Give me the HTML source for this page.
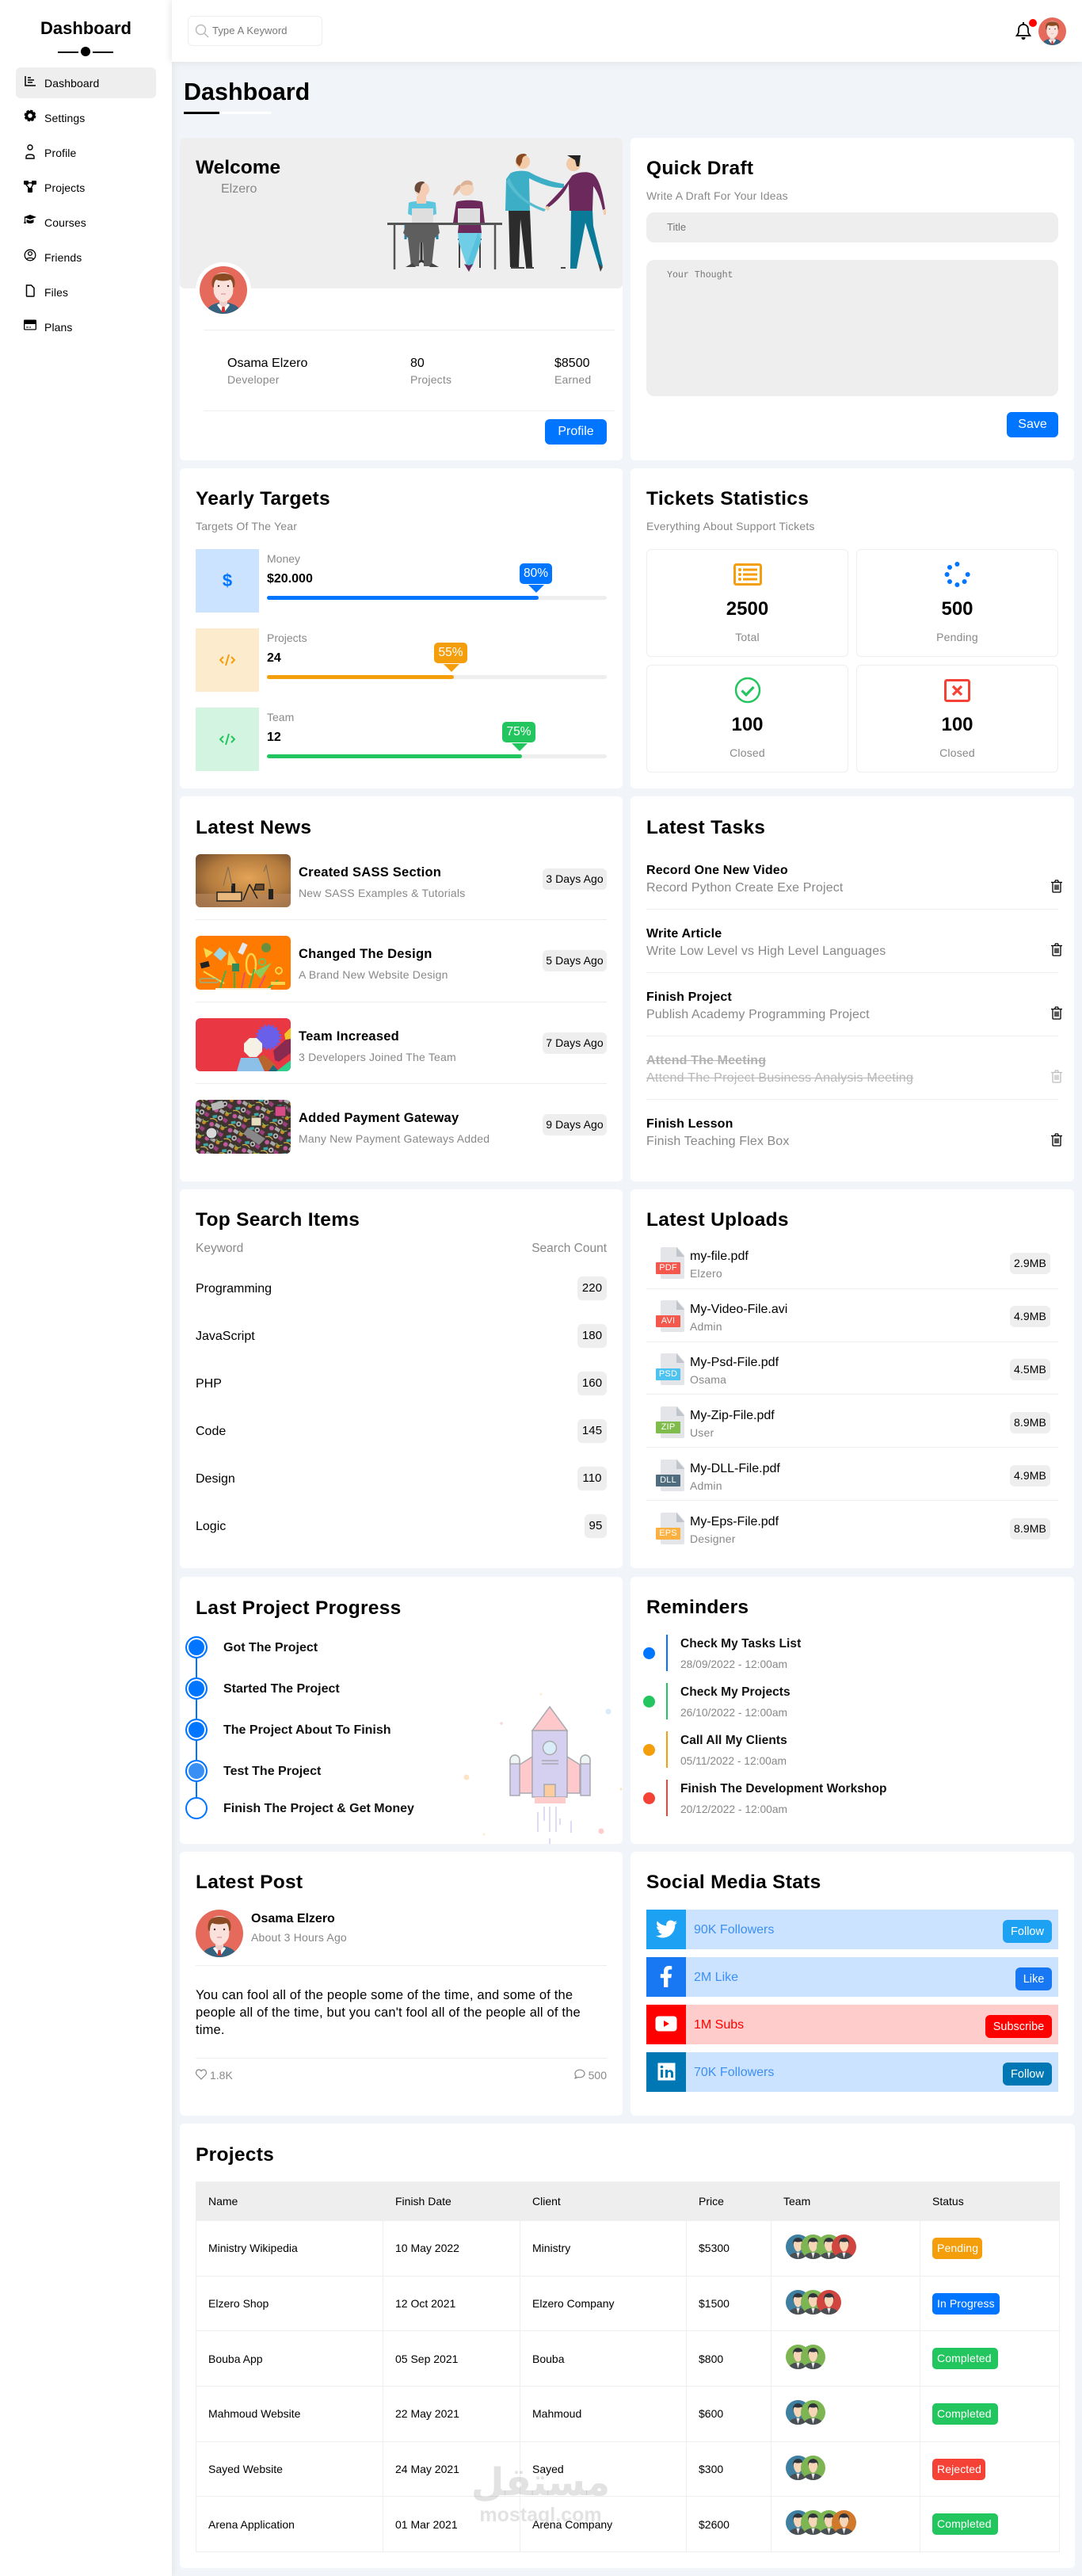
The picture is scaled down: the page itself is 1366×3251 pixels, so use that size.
<!DOCTYPE html>
<html lang="en">
<head>
<meta charset="utf-8">
<title>Dashboard</title>
<style>
*{box-sizing:border-box;margin:0;padding:0}
html,body{width:1366px;height:3251px;overflow:hidden}
body{position:relative;background:#f1f5f9;font-family:"Liberation Sans",Arial,sans-serif;color:#000;font-size:14px}
.a{position:absolute}
.t{position:absolute;line-height:20px;height:20px;white-space:nowrap;margin-top:1px}
.g{color:#888}
.b{font-weight:700}
.card{position:absolute;background:#fff;border-radius:6px}
.h2{position:absolute;left:0;font-size:24.5px;font-weight:700;line-height:30px;height:30px;white-space:nowrap;letter-spacing:.3px;margin-top:2px}
.ln{position:absolute;height:1px;background:#eee}
.bd{position:absolute;background:#eee;border-radius:6px;text-align:center;font-size:14px;letter-spacing:.1px}
.nav{position:absolute;left:56px;font-size:14px;line-height:20px;letter-spacing:.1px}
.sub{font-size:14px;letter-spacing:.2px}
.nt{font-size:16.5px;font-weight:700;letter-spacing:.25px}
.tt{font-size:16px;font-weight:700;letter-spacing:.15px}
.td{font-size:16px;letter-spacing:.12px}
.rt{font-size:15.5px;font-weight:700;color:#111;letter-spacing:.05px}
.rdt{font-size:13.8px}
.fl{position:absolute;left:828px;width:31px;height:15px;border-radius:1px;color:#fff;font-size:11px;line-height:15px;text-align:center;letter-spacing:.2px}
.pct{position:absolute;width:42px;height:26px;border-radius:5px;color:#fff;text-align:center;line-height:26px;font-size:15.5px}
.tri{position:absolute;width:0;height:0;border-left:10px solid transparent;border-right:10px solid transparent;border-top:10px solid}
.track{position:absolute;left:337px;width:429px;height:5px;background:#eee;border-radius:3px}
.track i{display:block;height:5px;border-radius:3px}
.tk{position:absolute;width:255px;height:136px;border:1px solid #eee;border-radius:6px}
.num{position:absolute;left:0;right:0;text-align:center;font-size:24px;font-weight:700;line-height:30px;top:60px}
.lab{position:absolute;left:0;right:0;text-align:center;font-size:14px;color:#888;line-height:20px;top:100px;letter-spacing:.2px}
.dot{position:absolute;left:234px;width:28px;height:28px;border-radius:50%;border:2px solid #0075ff;background:#0075ff;box-shadow:inset 0 0 0 2px #fff}
.st{position:absolute;left:282px;font-size:16px;font-weight:700;line-height:20px;white-space:nowrap;color:#111;margin-top:1px}
.rd{position:absolute;left:812px;width:15px;height:15px;border-radius:50%}
.rl{position:absolute;left:841px;width:2px;height:46px}
.soc{position:absolute;left:816px;width:520px;height:50px}
.soc svg{position:absolute;left:0;top:0}
.soc b{position:absolute;left:0;top:0;width:50px;height:50px;display:block}
.soc span{position:absolute;left:60px;top:16px;font-size:16px;line-height:20px}
.soc em{position:absolute;right:8px;top:13px;height:29px;border-radius:6px;color:#fff;font-style:normal;font-size:14.5px;line-height:30px;text-align:center}
table{position:absolute;left:247px;top:2753px;width:1090px;border-collapse:collapse;table-layout:fixed;font-size:14px}
td,th{border:1px solid #eee;padding:0 0 0 15px;text-align:left;font-weight:400;vertical-align:middle}
th{background:#eee;border-color:#eee;height:49px}
td{height:69.7px}
.s{display:inline-block;height:27px;line-height:27px;border-radius:5px;color:#fff;padding:0 6px;letter-spacing:.1px}
.team{position:relative;height:31px;top:-2px}
.team svg{position:absolute;top:0;width:31px;height:31px}
</style>
</head>
<body>
<svg width="0" height="0" style="position:absolute">
<defs>
<clipPath id="cc"><circle cx="30" cy="30" r="30"/></clipPath>
<symbol id="av" viewBox="0 0 60 60">
<g clip-path="url(#cc)">
<rect width="60" height="60" fill="#e56a5c"/>
<path d="M8 60c1-9 8-12 16-14h12c8 2 15 5 16 14z" fill="#35627e"/>
<path d="M25 44h10v5l-5 5-5-5z" fill="#eccfc8"/>
<path d="M24 47l6 6 6-6 2 2-6 8h-4l-6-8z" fill="#fff"/>
<path d="M28.5 51h3l1 7h-5z" fill="#d0342c"/>
<path d="M17 20c0-8 6-12 13-12s13 4 13 12l-1 14c-2 7-7 11-12 11s-10-4-12-11z" fill="#fbe1dc"/>
<path d="M16 26c-2-10 2-17 14-17s16 7 14 17l-2 1c0-5-1-8-3-10-6 2-13 2-18 0-2 2-3 5-3 10z" fill="#8a4a24"/>
<circle cx="24" cy="25" r="1.2" fill="#433"/><circle cx="36" cy="25" r="1.2" fill="#433"/>
<path d="M27 35h6" stroke="#d99" stroke-width="1.2"/>
</g>
</symbol>
<symbol id="tm" viewBox="0 0 60 60">
<g clip-path="url(#cc)">
<rect width="60" height="60" fill="currentColor"/>
<path d="M6 60c2-11 10-14 18-16h12c8 2 16 5 18 16z" fill="#4a4f54"/>
<path d="M26 44h8l-4 14z" fill="#eee"/>
<path d="M19 22c0-8 5-12 11-12s11 4 11 12-4 20-11 20-11-12-11-20z" fill="#f6d5b8"/>
<path d="M18 26c-2-12 4-18 12-18s14 6 12 18c-1-5-2-8-4-9-5 2-11 2-16 0-2 1-3 4-4 9z" fill="#30343a"/>
</g>
</symbol>
<symbol id="file" viewBox="0 0 30 40">
<path d="M0 2a2 2 0 0 1 2-2h19l9 10v28a2 2 0 0 1-2 2H2a2 2 0 0 1-2-2z" fill="#e3e5e8"/>
<path d="M20 0l10 12H20z" fill="#bfc5cb"/>
</symbol>
<pattern id="dood" width="34" height="26" patternUnits="userSpaceOnUse" patternTransform="scale(.72) rotate(18)">
<rect width="34" height="26" fill="#3f3330"/>
<circle cx="6" cy="6" r="4" fill="#c05a9c"/><rect x="12" y="2" width="9" height="6" fill="#a9a9a9" transform="rotate(15 16 5)"/>
<circle cx="26" cy="7" r="3.5" fill="#c98a2a"/><rect x="3" y="15" width="8" height="5" fill="#3ca8a4" transform="rotate(-25 7 17)"/>
<circle cx="17" cy="17" r="4.5" fill="#bdbdbd"/><circle cx="17" cy="17" r="2" fill="#222"/><path d="M23 14l8 2-2 7-7-3z" fill="#9c3f7e"/>
<path d="M0 24q8-5 14 1" stroke="#e2c04a" stroke-width="1.5" fill="none"/><path d="M22 2q5 6 11 0" stroke="#8ec44c" stroke-width="1.5" fill="none"/>
</pattern>
</defs>
</svg>

<!-- sidebar -->
<div class="a" style="left:0;top:0;width:217px;height:3251px;background:#fff;box-shadow:0 0 10px #ddd"></div>
<div class="a b" style="left:0;width:217px;top:21px;text-align:center;font-size:22px;line-height:30px">Dashboard</div>
<div class="a" style="left:73px;top:65px;width:26px;height:2px;background:#000"></div>
<div class="a" style="left:117px;top:65px;width:26px;height:2px;background:#000"></div>
<div class="a" style="left:102px;top:59px;width:12px;height:12px;border-radius:50%;background:#000"></div>
<div class="a" style="left:20px;top:85px;width:177px;height:39px;background:#eee;border-radius:6px"></div>
<div class="nav" style="top:95px">Dashboard</div>
<div class="nav" style="top:139px">Settings</div>
<div class="nav" style="top:183px">Profile</div>
<div class="nav" style="top:227px">Projects</div>
<div class="nav" style="top:271px">Courses</div>
<div class="nav" style="top:315px">Friends</div>
<div class="nav" style="top:359px">Files</div>
<div class="nav" style="top:403px">Plans</div>
<svg class="a" style="left:30px;top:94px" width="16" height="330" viewBox="0 0 16 330">
<path d="M2 2v12h13" fill="none" stroke="#000" stroke-width="1.5"/><path d="M5 4h4M5 7h8M5 10h6" stroke="#000" stroke-width="1.5"/>
<g transform="translate(8 52)"><circle r="4.5" fill="none" stroke="#000" stroke-width="3.5"/><circle r="6.2" fill="none" stroke="#000" stroke-width="2.4" stroke-dasharray="3.2 1.67"/></g>
<g fill="none" stroke="#000" stroke-width="1.4"><circle cx="8" cy="92" r="3"/><path d="M3 106v-2c0-2 2-3 5-3s5 1 5 3v2z"/></g>
<g fill="#000"><rect x="0" y="134" width="6" height="5" rx="1"/><rect x="10" y="134" width="6" height="5" rx="1"/><rect x="5" y="143" width="6" height="6" rx="1"/><path d="M3 136h10v1.5H3zM3 138l5 6-1 1-5-6zM12 137l-4 7 1 1 4-7z"/></g>
<path d="M8 177l8 3-8 3-6-2.200V185l1 3H0l1-3v-4.700L0 180zM3.5 183l4.5 1.600 4.500-1.600v3.500c-2 2-7 2-9 0z" fill="#000"/>
<g fill="none" stroke="#000" stroke-width="1.3"><circle cx="8" cy="228" r="6.8"/><circle cx="8" cy="226" r="2.4"/><path d="M3.8 233c1-2 7.400-2 8.400 0"/></g>
<path d="M3.5 266h6l3.500 3.500V279a1 1 0 0 1-1 1H4.500a1 1 0 0 1-1-1z" fill="none" stroke="#000" stroke-width="1.5"/>
<path d="M0 311a1.500 1.500 0 0 1 1.500-1.500h13a1.500 1.500 0 0 1 1.500 1.500v10a1.500 1.500 0 0 1-1.500 1.500h-13A1.500 1.500 0 0 1 0 321z" fill="#000"/><rect x="1.3" y="315" width="13.4" height="6.3" fill="#fff"/><path d="M3 319h3M7 319h2" stroke="#000"/>
</svg>

<!-- header -->
<div class="a" style="left:217px;top:0;width:1149px;height:78px;background:#fff;box-shadow:0 0 10px #ddd"></div>
<div class="a" style="left:237px;top:20px;width:170px;height:38px;border:1px solid #eee;border-radius:6px"></div>
<svg class="a" style="left:246px;top:30px" width="18" height="18" viewBox="0 0 18 18"><circle cx="7.5" cy="7.5" r="6" fill="none" stroke="#bbb" stroke-width="1.5"/><path d="M12 12l5 5" stroke="#bbb" stroke-width="1.5"/></svg>
<div class="t" style="left:268px;top:28px;font-size:13px;color:#777;letter-spacing:.1px">Type A Keyword</div>
<svg class="a" style="left:1282px;top:28px" width="20" height="23" viewBox="0 0 20 23"><path d="M10 3c4 0 6 3 6 6v3c0 2 1 3 2.500 5H1.500C3 15 4 14 4 12V9c0-3 2-6 6-6z" fill="none" stroke="#000" stroke-width="1.7"/><path d="M9 0h2v3H9zM7.500 19h5c0 2-1 3-2.500 3s-2.500-1-2.500-3z" fill="#000"/></svg>
<div class="a" style="left:1299px;top:24px;width:10px;height:10px;border-radius:50%;background:#f00"></div>
<svg class="a" style="left:1311px;top:22px" width="35" height="35"><use href="#av"/></svg>

<!-- title -->
<div class="a b" style="left:232px;top:96px;font-size:30.5px;line-height:40px">Dashboard</div>
<div class="a" style="left:232px;top:141px;width:110px;height:3px;background:#fff"></div>
<div class="a" style="left:232px;top:141px;width:45px;height:3px;background:#000"></div>

<!-- welcome -->
<div class="card" style="left:227px;top:174px;width:559px;height:407px"></div>
<div class="a" style="left:227px;top:174px;width:559px;height:190px;background:#eee;border-radius:6px"></div>
<div class="a b" style="left:247px;top:197px;font-size:24.5px;line-height:30px">Welcome</div>
<div class="t g" style="left:279px;top:228px;font-size:16px">Elzero</div>
<svg class="a" style="left:480px;top:185px" width="300" height="165" viewBox="480 185 300 165">
<path d="M512 282v20M552 282v20M513 298h40" stroke="#2a7f9e" stroke-width="3"/>
<path d="M532 300v28M520 335l12-6 12 6" stroke="#333" stroke-width="3" fill="none"/>
<path d="M578 302h30M580 302v36M606 302v36" stroke="#444" stroke-width="2" fill="none"/>
<path d="M513 282h40l2 12-6 6-4 36h-10l-1-30h-4l-1 30h-10l-4-36-6-6z" fill="#5e5e5e"/>
<path d="M516 256c4-3 30-3 34 0l1 14-5 2v9h-26v-9l-5-2z" fill="#5cc6de"/>
<rect x="526" y="247" width="12" height="10" fill="#f4cdb4"/>
<circle cx="533" cy="239" r="9" fill="#f4cdb4"/><path d="M524 241c-2-8 3-12 9-12 2 0 3 1 3 2-4 1-5 5-5 8l-2 5z" fill="#6a4a3a"/>
<rect x="520" y="263" width="27" height="19" fill="#dedede"/>
<path d="M512 337l9-5 4 5zM545 332l9 5h-12z" fill="#444"/>
<path d="M578 293h30l-1 12-10 30h-8l-10-30z" fill="#6fcde6"/>
<path d="M604 293l3 10-11 34h-8z" fill="#58c2dd"/>
<path d="M586 333l6 10 5-10-5 2z" fill="#6c2a5c"/>
<path d="M576 255c4-3 29-3 33 0l3 26-5 3 1 10h-30l1-10-7-3z" fill="#6c2a5c"/>
<circle cx="589" cy="238" r="9" fill="#f3d3b9"/><path d="M581 235c2-7 9-9 14-6 2 2 2 4 1 5-5-2-10-1-12 1zM582 233c-4 0-8 4-10 14 4-2 7-6 9-9z" fill="#dcb195"/>
<rect x="578" y="263" width="28" height="19" fill="#dedede"/>
<rect x="489" y="281" width="145" height="3" fill="#555"/>
<path d="M498 284v56M625 284v56" stroke="#555" stroke-width="2.5"/>
<path d="M642 265h27l3 72h-8l-7-60-2 60h-11z" fill="#2c2c2c"/>
<path d="M649 337h-4v2h17v-2zM664 337h10v2h-10z" fill="#444"/>
<path d="M644 219c6-4 18-4 24-2 10 6 28 13 44 15v5c-16 1-32-6-44-12l1 41h-31l1-40z" fill="#3cafc6"/>
<path d="M643 224c6 16 20 32 46 40l-2 3c-24-8-40-24-48-38z" fill="#57bcd0"/>
<circle cx="660" cy="204" r="9" fill="#f3cba8"/><path d="M652 206c-2-8 3-12 9-12 2 0 4 1 4 2-5 1-6 4-6 8l-3 6z" fill="#8a4a24"/>
<path d="M721 265h27l1 20 12 51-4 3-18-58-11 58h-8z" fill="#0b7a99"/>
<path d="M714 337v2h-6v-2zM755 332l6 5-3 6z" fill="#444"/>
<path d="M722 222c8-6 22-6 27-2 8 6 12 24 15 44l-3 1c-3-14-7-24-12-30l-1 31h-29l-1-34c-4 10-14 22-26 30l-3-2c12-12 24-24 33-38z" fill="#6c2a5c"/>
<circle cx="724" cy="207" r="9" fill="#f3cba8"/><path d="M716 196h17l-2 14h-3l-2-8z" fill="#222"/>
<path d="M688 261l4-1 2 4-3 2zM762 264h3v7h-3z" fill="#f3cba8"/>
</svg>
<div class="a" style="left:247px;top:331px;width:70px;height:70px;border-radius:50%;background:#fff"></div>
<svg class="a" style="left:252px;top:336px" width="60" height="60"><use href="#av"/></svg>
<div class="ln" style="left:257px;top:416px;width:519px"></div>
<div class="t" style="left:287px;top:448px;font-size:16px">Osama Elzero</div>
<div class="t g sub" style="left:287px;top:468px">Developer</div>
<div class="t" style="left:518px;top:448px;font-size:16px">80</div>
<div class="t g sub" style="left:518px;top:468px">Projects</div>
<div class="t" style="left:700px;top:448px;font-size:16px">$8500</div>
<div class="t g sub" style="left:700px;top:468px">Earned</div>
<div class="ln" style="left:257px;top:518px;width:519px"></div>
<div class="a" style="left:688px;top:529px;width:78px;height:32px;background:#0075ff;border-radius:6px;color:#fff;text-align:center;line-height:32px;font-size:16px">Profile</div>

<!-- draft -->
<div class="card" style="left:796px;top:174px;width:560px;height:407px"></div>
<div class="h2" style="left:816px;top:196px">Quick Draft</div>
<div class="t g sub" style="left:816px;top:236px">Write A Draft For Your Ideas</div>
<div class="a" style="left:816px;top:268px;width:520px;height:38px;background:#eee;border-radius:10px"></div>
<div class="t" style="left:842px;top:276px;font-size:13px;color:#757575">Title</div>
<div class="a" style="left:816px;top:328px;width:520px;height:172px;background:#eee;border-radius:10px"></div>
<div class="t" style="left:842px;top:337px;font-family:'Liberation Mono',monospace;font-size:11.6px;color:#757575">Your Thought</div>
<div class="a" style="left:1271px;top:520px;width:65px;height:32px;background:#0075ff;border-radius:6px;color:#fff;text-align:center;line-height:32px;font-size:16px">Save</div>

<!-- targets -->
<div class="card" style="left:227px;top:591px;width:559px;height:404px"></div>
<div class="h2" style="left:247px;top:613px">Yearly Targets</div>
<div class="t g sub" style="left:247px;top:653px">Targets Of The Year</div>
<div class="a" style="left:247px;top:693px;width:80px;height:80px;background:#cce3ff"></div>
<div class="a" style="left:247px;top:793px;width:80px;height:80px;background:#fdebcd"></div>
<div class="a" style="left:247px;top:893px;width:80px;height:80px;background:#d2f4e0"></div>
<div class="a b" style="left:247px;top:718px;width:80px;text-align:center;font-size:22px;line-height:30px;color:#0075ff">$</div>
<svg class="a" style="left:277px;top:826px" width="20" height="14" viewBox="0 0 20 14" fill="none" stroke="#f59e0b" stroke-width="2"><path d="M5 3L1 7l4 4M15 3l4 4-4 4M12 0L8 14"/></svg>
<svg class="a" style="left:277px;top:926px" width="20" height="14" viewBox="0 0 20 14" fill="none" stroke="#22c55e" stroke-width="2"><path d="M5 3L1 7l4 4M15 3l4 4-4 4M12 0L8 14"/></svg>
<div class="t g" style="left:337px;top:694px;font-size:14px">Money</div>
<div class="t b" style="left:337px;top:720px;font-size:16px">$20.000</div>
<div class="t g" style="left:337px;top:794px;font-size:14px">Projects</div>
<div class="t b" style="left:337px;top:820px;font-size:16px">24</div>
<div class="t g" style="left:337px;top:894px;font-size:14px">Team</div>
<div class="t b" style="left:337px;top:920px;font-size:16px">12</div>
<div class="track" style="top:752px"><i style="width:343px;background:#0075ff"></i></div>
<div class="track" style="top:852px"><i style="width:236px;background:#f59e0b"></i></div>
<div class="track" style="top:952px"><i style="width:322px;background:#22c55e"></i></div>
<div class="pct" style="left:656px;top:711px;width:41px;background:#0075ff">80%</div>
<div class="tri" style="left:667px;top:738px;border-top-color:#0075ff"></div>
<div class="pct" style="left:548px;top:811px;background:#f59e0b">55%</div>
<div class="tri" style="left:560px;top:838px;border-top-color:#f59e0b"></div>
<div class="pct" style="left:634px;top:911px;background:#22c55e">75%</div>
<div class="tri" style="left:646px;top:938px;border-top-color:#22c55e"></div>

<!-- tickets -->
<div class="card" style="left:796px;top:591px;width:560px;height:404px"></div>
<div class="h2" style="left:816px;top:613px">Tickets Statistics</div>
<div class="t g sub" style="left:816px;top:653px">Everything About Support Tickets</div>
<div class="tk" style="left:816px;top:693px"><div class="num">2500</div><div class="lab">Total</div></div>
<div class="tk" style="left:1081px;top:693px"><div class="num">500</div><div class="lab">Pending</div></div>
<div class="tk" style="left:816px;top:839px"><div class="num">100</div><div class="lab">Closed</div></div>
<div class="tk" style="left:1081px;top:839px"><div class="num">100</div><div class="lab">Closed</div></div>
<svg class="a" style="left:926px;top:711px" width="36" height="28" viewBox="0 0 36 28"><rect x="1.5" y="1.5" width="33" height="25" rx="2" fill="none" stroke="#f59e0b" stroke-width="3"/><g fill="#f59e0b"><circle cx="8" cy="8" r="2"/><circle cx="8" cy="14" r="2"/><circle cx="8" cy="20" r="2"/><rect x="12" y="6.5" width="18" height="3"/><rect x="12" y="12.5" width="18" height="3"/><rect x="12" y="18.5" width="18" height="3"/></g></svg>
<svg class="a" style="left:1190px;top:708px" width="36" height="34" viewBox="1190 708 36 34" fill="#0075ff"><circle cx="1208.4" cy="712" r="3"/><circle cx="1199" cy="716" r="3"/><circle cx="1221.7" cy="725" r="3"/><circle cx="1195.6" cy="725" r="3"/><circle cx="1199" cy="734" r="3"/><circle cx="1217.6" cy="734" r="3"/><circle cx="1208.4" cy="738" r="3"/></svg>
<svg class="a" style="left:927px;top:854px" width="34" height="34" viewBox="0 0 34 34"><circle cx="17" cy="17" r="15" fill="none" stroke="#22c55e" stroke-width="2.5"/><path d="M9.500 17.500l5.500 5.500 9.500-10" fill="none" stroke="#22c55e" stroke-width="3.2"/></svg>
<svg class="a" style="left:1192px;top:857px" width="33" height="29" viewBox="0 0 33 29"><rect x="1.5" y="1.5" width="30" height="26" rx="2" fill="none" stroke="#f44336" stroke-width="3"/><path d="M11 9l11 11M22 9L11 20" stroke="#f44336" stroke-width="3.2"/></svg>

<!-- news -->
<div class="card" style="left:227px;top:1005px;width:559px;height:486px"></div>
<div class="h2" style="left:247px;top:1028px">Latest News</div>
<svg class="a" style="left:247px;top:1078px;border-radius:6px" width="120" height="67" viewBox="0 0 120 67">
<defs><radialGradient id="g1" cx=".55" cy=".45" r=".7"><stop offset="0" stop-color="#e3a456"/><stop offset=".6" stop-color="#b27a3e"/><stop offset="1" stop-color="#6e4a2c"/></radialGradient></defs>
<rect width="120" height="67" fill="url(#g1)"/><rect y="50" width="120" height="17" fill="#b8865a" opacity=".7"/>
<rect x="27" y="48" width="31" height="11" fill="#e8b87c" stroke="#222" stroke-width="1.5"/><rect x="45" y="37" width="5" height="12" fill="#222"/><rect x="92" y="44" width="6" height="13" fill="#222"/>
<path d="M60 58l8-20M68 38l10 18M76 38h10v7H74z" stroke="#222" fill="#6e4a2c" stroke-width="1.5"/><path d="M35 40l6-24 5 24M95 44l-6-30-3 8" stroke="#7a6a58" fill="none"/>
</svg>
<svg class="a" style="left:247px;top:1181px;border-radius:6px" width="120" height="68" viewBox="0 0 120 68">
<rect width="120" height="68" fill="#ff7a00"/>
<path d="M10 15l12 6-9 7z" fill="#f7d84a"/><rect x="25" y="17" width="12" height="12" fill="#9bd6e4" transform="rotate(40 31 23)"/>
<path d="M42 18l14 25-8-6-8 0z" fill="#f9c94a"/><rect x="56" y="9" width="7" height="14" fill="#e7e7e7" transform="rotate(25 59 16)"/><rect x="6" y="33" width="11" height="7" fill="#222" transform="rotate(-15 12 36)"/>
<path d="M10 45l26 15" stroke="#f7d84a" stroke-width="2"/><ellipse cx="70" cy="36" rx="6" ry="13" fill="none" stroke="#f9d44a" stroke-width="2.5"/>
<path d="M74 45l22-11-14 20z" fill="#8ecb5a"/><circle cx="89" cy="15" r="6" fill="#6a8f3c"/><circle cx="84" cy="33" r="4" fill="none" stroke="#6ec05a" stroke-width="2"/>
<rect x="46" y="35" width="9" height="10" fill="#2f8b57"/>
<path d="M31 66l7-22M49 66V46M68 66l6-24M92 66l12-10" stroke-width="2" stroke="#3cb44a"/><path d="M58 66l4-20M80 66l8-16" stroke-width="2" stroke="#e94f6a"/>
<rect x="5" y="54" width="24" height="5" rx="2.5" fill="none" stroke="#67c7c0"/><rect x="25" y="66" width="70" height="2" fill="#f5efd8"/>
<circle cx="105" cy="44" r="4" fill="none" stroke="#f9d44a" stroke-width="2"/><rect x="95" y="58" width="18" height="4" fill="#f9d44a"/>
</svg>
<svg class="a" style="left:247px;top:1285px;border-radius:6px" width="120" height="67" viewBox="0 0 120 67">
<rect width="120" height="67" fill="#e93744"/><circle cx="92" cy="24" r="14" fill="#6a5fe8"/><circle cx="92" cy="24" r="15" fill="none" stroke="#6a5fe8" stroke-width="2.5" stroke-dasharray="2.500 2.500"/>
<path d="M66 33l7-7h9l7 7v10l-7 7h-9l-7-7" fill="#f5f1e4" transform="translate(-5 -1)"/>
<path d="M112 20l8-8v16l-6 3z" fill="#f2c628"/><path d="M86 46l16 14-13 7-15-14z" fill="#b8642c"/><path d="M98 41l16-14 6-1v18l-15 11-5-2z" fill="#8b2a50"/>
<path d="M52 67l5-17h22l8 17z" fill="#8cc0e8"/><path d="M92 67l6-8 7 8z" fill="#1f6b78"/><path d="M102 67l18-14v14z" fill="#2fd08c"/>
</svg>
<svg class="a" style="left:247px;top:1388px;border-radius:6px" width="120" height="68" viewBox="0 0 120 68">
<rect width="120" height="68" fill="url(#dood)"/><rect x="20" y="3" width="15" height="9" fill="#b8b8b8" transform="rotate(-15 27 7)"/><rect x="70" y="22" width="13" height="11" fill="#e8dcc0" stroke="#222"/><rect x="100" y="8" width="14" height="13" fill="#d84c86" stroke="#222"/><circle cx="20" cy="42" r="7" fill="#d8d8d8" stroke="#222"/><path d="M66 35l22 14-8 8-20-14z" fill="#888"/>
</svg>
<div class="t nt" style="left:377px;top:1090px">Created SASS Section</div>
<div class="t g sub" style="left:377px;top:1116px">New SASS Examples &amp; Tutorials</div>
<div class="bd" style="left:685px;top:1096px;width:81px;height:27px;line-height:27px">3 Days Ago</div>
<div class="ln" style="left:247px;top:1160px;width:519px"></div>
<div class="t nt" style="left:377px;top:1193px">Changed The Design</div>
<div class="t g sub" style="left:377px;top:1219px">A Brand New Website Design</div>
<div class="bd" style="left:685px;top:1199px;width:81px;height:27px;line-height:27px">5 Days Ago</div>
<div class="ln" style="left:247px;top:1264px;width:519px"></div>
<div class="t nt" style="left:377px;top:1297px">Team Increased</div>
<div class="t g sub" style="left:377px;top:1323px">3 Developers Joined The Team</div>
<div class="bd" style="left:685px;top:1303px;width:81px;height:27px;line-height:27px">7 Days Ago</div>
<div class="ln" style="left:247px;top:1367px;width:519px"></div>
<div class="t nt" style="left:377px;top:1400px">Added Payment Gateway</div>
<div class="t g sub" style="left:377px;top:1426px">Many New Payment Gateways Added</div>
<div class="bd" style="left:685px;top:1406px;width:81px;height:27px;line-height:27px">9 Days Ago</div>

<!-- tasks -->
<div class="card" style="left:796px;top:1005px;width:560px;height:486px"></div>
<div class="h2" style="left:816px;top:1028px">Latest Tasks</div>
<div class="t tt" style="left:816px;top:1088px">Record One New Video</div>
<div class="t g td" style="left:816px;top:1110px">Record Python Create Exe Project</div>
<div class="ln" style="left:816px;top:1147px;width:520px"></div>
<div class="t tt" style="left:816px;top:1168px">Write Article</div>
<div class="t g td" style="left:816px;top:1190px">Write Low Level vs High Level Languages</div>
<div class="ln" style="left:816px;top:1227px;width:520px"></div>
<div class="t tt" style="left:816px;top:1248px">Finish Project</div>
<div class="t g td" style="left:816px;top:1270px">Publish Academy Programming Project</div>
<div class="ln" style="left:816px;top:1307px;width:520px"></div>
<div class="t tt" style="left:816px;top:1328px;opacity:.3;text-decoration:line-through">Attend The Meeting</div>
<div class="t td" style="left:816px;top:1350px;color:#888;opacity:.6;letter-spacing:.25px;text-decoration:line-through">Attend The Project Business Analysis Meeting</div>
<div class="ln" style="left:816px;top:1387px;width:520px"></div>
<div class="t tt" style="left:816px;top:1408px">Finish Lesson</div>
<div class="t g td" style="left:816px;top:1430px">Finish Teaching Flex Box</div>
<svg class="a" style="left:1327px;top:1110px" width="14" height="17" viewBox="0 0 14 17" fill="none" stroke="#000" stroke-width="1.3"><path d="M0 3.500h14M4.500 3.500l1-2.500h3l1 2.500M2 3.500V15a1 1 0 0 0 1 1h8a1 1 0 0 0 1-1V3.500M5 6.500V13M7 6.500V13M9 6.500V13"/></svg>
<svg class="a" style="left:1327px;top:1190px" width="14" height="17" viewBox="0 0 14 17" fill="none" stroke="#000" stroke-width="1.3"><path d="M0 3.500h14M4.500 3.500l1-2.500h3l1 2.500M2 3.500V15a1 1 0 0 0 1 1h8a1 1 0 0 0 1-1V3.500M5 6.500V13M7 6.500V13M9 6.500V13"/></svg>
<svg class="a" style="left:1327px;top:1270px" width="14" height="17" viewBox="0 0 14 17" fill="none" stroke="#000" stroke-width="1.3"><path d="M0 3.500h14M4.500 3.500l1-2.500h3l1 2.500M2 3.500V15a1 1 0 0 0 1 1h8a1 1 0 0 0 1-1V3.500M5 6.500V13M7 6.500V13M9 6.500V13"/></svg>
<svg class="a" style="left:1327px;top:1350px;opacity:.25" width="14" height="17" viewBox="0 0 14 17" fill="none" stroke="#000" stroke-width="1.3"><path d="M0 3.500h14M4.500 3.500l1-2.500h3l1 2.500M2 3.500V15a1 1 0 0 0 1 1h8a1 1 0 0 0 1-1V3.500M5 6.500V13M7 6.500V13M9 6.500V13"/></svg>
<svg class="a" style="left:1327px;top:1430px" width="14" height="17" viewBox="0 0 14 17" fill="none" stroke="#000" stroke-width="1.3"><path d="M0 3.500h14M4.500 3.500l1-2.500h3l1 2.500M2 3.500V15a1 1 0 0 0 1 1h8a1 1 0 0 0 1-1V3.500M5 6.500V13M7 6.500V13M9 6.500V13"/></svg>

<!-- search -->
<div class="card" style="left:227px;top:1501px;width:559px;height:478px"></div>
<div class="h2" style="left:247px;top:1523px">Top Search Items</div>
<div class="t g" style="left:247px;top:1565px;font-size:15.5px">Keyword</div>
<div class="t g" style="right:600px;top:1565px;font-size:15.5px">Search Count</div>
<div class="t" style="left:247px;top:1616px;font-size:16px">Programming</div><div class="bd" style="left:729px;top:1611px;width:37px;height:30px;line-height:30px;font-size:15px">220</div>
<div class="t" style="left:247px;top:1676px;font-size:16px">JavaScript</div><div class="bd" style="left:729px;top:1671px;width:37px;height:30px;line-height:30px;font-size:15px">180</div>
<div class="t" style="left:247px;top:1736px;font-size:16px">PHP</div><div class="bd" style="left:729px;top:1731px;width:37px;height:30px;line-height:30px;font-size:15px">160</div>
<div class="t" style="left:247px;top:1796px;font-size:16px">Code</div><div class="bd" style="left:729px;top:1791px;width:37px;height:30px;line-height:30px;font-size:15px">145</div>
<div class="t" style="left:247px;top:1856px;font-size:16px">Design</div><div class="bd" style="left:729px;top:1851px;width:37px;height:30px;line-height:30px;font-size:15px">110</div>
<div class="t" style="left:247px;top:1916px;font-size:16px">Logic</div><div class="bd" style="left:738px;top:1911px;width:28px;height:30px;line-height:30px;font-size:15px">95</div>

<!-- uploads -->
<div class="card" style="left:796px;top:1501px;width:560px;height:478px"></div>
<div class="h2" style="left:816px;top:1523px">Latest Uploads</div>
<svg class="a" style="left:834px;top:1574px" width="30" height="40"><use href="#file"/></svg>
<div class="fl" style="top:1593px;background:#f4574b">PDF</div>
<div class="t" style="left:871px;top:1575px;font-size:16px">my-file.pdf</div><div class="t g sub" style="left:871px;top:1596px">Elzero</div>
<div class="bd" style="left:1275px;top:1581px;width:51px;height:27px;line-height:27px">2.9MB</div>
<div class="ln" style="left:816px;top:1626px;width:520px"></div>
<svg class="a" style="left:834px;top:1641px" width="30" height="40"><use href="#file"/></svg>
<div class="fl" style="top:1660px;background:#f4574b">AVI</div>
<div class="t" style="left:871px;top:1642px;font-size:16px">My-Video-File.avi</div><div class="t g sub" style="left:871px;top:1663px">Admin</div>
<div class="bd" style="left:1275px;top:1648px;width:51px;height:27px;line-height:27px">4.9MB</div>
<div class="ln" style="left:816px;top:1693px;width:520px"></div>
<svg class="a" style="left:834px;top:1708px" width="30" height="40"><use href="#file"/></svg>
<div class="fl" style="top:1727px;background:#4fc3ef">PSD</div>
<div class="t" style="left:871px;top:1709px;font-size:16px">My-Psd-File.pdf</div><div class="t g sub" style="left:871px;top:1730px">Osama</div>
<div class="bd" style="left:1275px;top:1715px;width:51px;height:27px;line-height:27px">4.5MB</div>
<div class="ln" style="left:816px;top:1759px;width:520px"></div>
<svg class="a" style="left:834px;top:1775px" width="30" height="40"><use href="#file"/></svg>
<div class="fl" style="top:1794px;background:#80bc4c">ZIP</div>
<div class="t" style="left:871px;top:1776px;font-size:16px">My-Zip-File.pdf</div><div class="t g sub" style="left:871px;top:1797px">User</div>
<div class="bd" style="left:1275px;top:1782px;width:51px;height:27px;line-height:27px">8.9MB</div>
<div class="ln" style="left:816px;top:1826px;width:520px"></div>
<svg class="a" style="left:834px;top:1842px" width="30" height="40"><use href="#file"/></svg>
<div class="fl" style="top:1861px;background:#4f6d7e">DLL</div>
<div class="t" style="left:871px;top:1843px;font-size:16px">My-DLL-File.pdf</div><div class="t g sub" style="left:871px;top:1864px">Admin</div>
<div class="bd" style="left:1275px;top:1849px;width:51px;height:27px;line-height:27px">4.9MB</div>
<div class="ln" style="left:816px;top:1893px;width:520px"></div>
<svg class="a" style="left:834px;top:1909px" width="30" height="40"><use href="#file"/></svg>
<div class="fl" style="top:1928px;background:#fbb040">EPS</div>
<div class="t" style="left:871px;top:1910px;font-size:16px">My-Eps-File.pdf</div><div class="t g sub" style="left:871px;top:1931px">Designer</div>
<div class="bd" style="left:1275px;top:1916px;width:51px;height:27px;line-height:27px">8.9MB</div>

<!-- progress -->
<div class="card" style="left:227px;top:1990px;width:559px;height:337px"></div>
<div class="h2" style="left:247px;top:2013px">Last Project Progress</div>
<div class="a" style="left:247px;top:2085px;width:2px;height:190px;background:#0075ff"></div>
<div class="dot" style="top:2065px"></div><div class="st" style="top:2069px">Got The Project</div>
<div class="dot" style="top:2117px"></div><div class="st" style="top:2121px">Started The Project</div>
<div class="dot" style="top:2169px"></div><div class="st" style="top:2173px">The Project About To Finish</div>
<div class="dot" style="top:2221px;background:#3a8ff5"></div><div class="st" style="top:2225px">Test The Project</div>
<div class="dot" style="top:2268px;background:#fff;box-shadow:none"></div><div class="st" style="top:2272px">Finish The Project &amp; Get Money</div>
<svg class="a" style="left:580px;top:2130px" width="206" height="197" viewBox="580 2130 206 197">
<g stroke="#a9a9b0" stroke-width="1.5">
<path d="M656 2227l16-10v46h-16zM732 2227l-16-10v46h16z" fill="#ffc9cc"/>
<path d="M644 2221a6 6 0 0 1 12 0v45h-12zM733 2221a6 6 0 0 1 12 0v45h-12z" fill="#d5cff0"/>
<path d="M644 2226v-5a6 6 0 0 1 12 0v5zM733 2226v-5a6 6 0 0 1 12 0v5z" fill="#eef4f4"/>
<path d="M694 2154l22 30h-44z" fill="#ffc9cc"/>
<rect x="672" y="2184" width="44" height="84" fill="#d5cff0"/>
<circle cx="694" cy="2206" r="8.5" fill="#d9edf8"/>
<path d="M684 2222h21M684 2226h21" fill="none"/>
<rect x="687" y="2252" width="14" height="16" fill="#fbcd9e"/>
</g>
<rect x="675" y="2268" width="39" height="8" fill="#fcc"/>
<path d="M679 2287v25M687 2280v18M694 2280v32M702 2280v32M707 2295v8M721 2298v15M694 2320v8" stroke="#d5cff0" stroke-width="1.5"/>
<circle cx="589" cy="2243" r="3.5" fill="#fde3c6"/><circle cx="768" cy="2160" r="3.5" fill="#d4ecfb"/><circle cx="633" cy="2175" r="1.8" fill="#fcd6d6"/><circle cx="683" cy="2138" r="1.5" fill="#fdebcd"/><circle cx="759" cy="2311" r="3.5" fill="#fcc"/><circle cx="611" cy="2315" r="1.5" fill="#fdebcd"/><circle cx="784" cy="2258" r="1.5" fill="#fde3c6"/>
</svg>

<!-- reminders -->
<div class="card" style="left:796px;top:1990px;width:560px;height:337px"></div>
<div class="h2" style="left:816px;top:2012px">Reminders</div>
<div class="rd" style="top:2079px;background:#0075ff"></div><div class="rl" style="top:2063px;background:#0075ff"></div>
<div class="t rt" style="left:859px;top:2064px">Check My Tasks List</div><div class="t g rdt" style="left:859px;top:2090px">28/09/2022 - 12:00am</div>
<div class="rd" style="top:2140px;background:#22c55e"></div><div class="rl" style="top:2124px;background:#22c55e"></div>
<div class="t rt" style="left:859px;top:2125px">Check My Projects</div><div class="t g rdt" style="left:859px;top:2151px">26/10/2022 - 12:00am</div>
<div class="rd" style="top:2201px;background:#f59e0b"></div><div class="rl" style="top:2185px;background:#f59e0b"></div>
<div class="t rt" style="left:859px;top:2186px">Call All My Clients</div><div class="t g rdt" style="left:859px;top:2212px">05/11/2022 - 12:00am</div>
<div class="rd" style="top:2262px;background:#f44336"></div><div class="rl" style="top:2246px;background:#f44336"></div>
<div class="t rt" style="left:859px;top:2247px">Finish The Development Workshop</div><div class="t g rdt" style="left:859px;top:2273px">20/12/2022 - 12:00am</div>

<!-- post -->
<div class="card" style="left:227px;top:2337px;width:559px;height:333px"></div>
<div class="h2" style="left:247px;top:2359px">Latest Post</div>
<svg class="a" style="left:247px;top:2410px" width="60" height="60"><use href="#av"/></svg>
<div class="t b" style="left:317px;top:2411px;font-size:16px">Osama Elzero</div>
<div class="t g sub" style="left:317px;top:2434px">About 3 Hours Ago</div>
<div class="ln" style="left:247px;top:2480px;width:519px"></div>
<div class="a" style="left:247px;top:2507px;width:530px;font-size:16.5px;line-height:22px;letter-spacing:.17px;white-space:nowrap">You can fool all of the people some of the time, and some of the<br>people all of the time, but you can't fool all of the people all of the<br>time.</div>
<div class="ln" style="left:247px;top:2597px;width:519px"></div>
<svg class="a" style="left:247px;top:2611px" width="14" height="14" viewBox="0 0 14 14"><path d="M7 13L1.500 7.500C-.5 5 1 1 4 1c1.300 0 2.300.7 3 1.800C7.700 1.700 8.700 1 10 1c3 0 4.500 4 2.500 6.500z" fill="none" stroke="#888" stroke-width="1.2"/></svg>
<div class="t g" style="left:265px;top:2608px;font-size:14px">1.8K</div>
<svg class="a" style="left:725px;top:2611px" width="14" height="14" viewBox="0 0 14 14"><path d="M7 1.200c3.300 0 6 2 6 4.800s-2.700 4.800-6 4.800c-.9 0-1.700-.1-2.400-.4-1 .8-2.200 1.300-3.600 1.400.7-.8 1.200-1.700 1.300-2.600C1.500 9.300 1 7.700 1 6c0-2.800 2.700-4.800 6-4.800z" fill="none" stroke="#888" stroke-width="1.2"/></svg>
<div class="t g" style="right:600px;top:2608px;font-size:14px">500</div>

<!-- social -->
<div class="card" style="left:796px;top:2337px;width:560px;height:333px"></div>
<div class="h2" style="left:816px;top:2359px">Social Media Stats</div>
<div class="soc" style="top:2410px;background:#cce3ff"><b style="background:#1da1f2"></b><svg style="left:12px;top:11px" width="27" height="27" viewBox="0 0 512 512"><path fill="#fff" d="M459.37 151.716c.325 4.548.325 9.097.325 13.645 0 138.72-105.583 298.558-298.558 298.558-59.452 0-114.68-17.219-161.137-47.106 8.447.974 16.568 1.299 25.34 1.299 49.055 0 94.213-16.568 130.274-44.832-46.132-.975-84.792-31.188-98.112-72.772 6.498.974 12.995 1.624 19.818 1.624 9.421 0 18.843-1.3 27.614-3.573-48.081-9.747-84.143-51.98-84.143-102.985v-1.299c13.969 7.797 30.214 12.67 47.431 13.319-28.264-18.843-46.781-51.005-46.781-87.391 0-19.492 5.197-37.36 14.294-52.954 51.655 63.675 129.3 105.258 216.365 109.807-1.624-7.797-2.599-15.918-2.599-24.04 0-57.828 46.782-104.934 104.934-104.934 30.213 0 57.502 12.67 76.67 33.137 23.715-4.548 46.456-13.32 66.599-25.34-7.798 24.366-24.366 44.833-46.132 57.827 21.117-2.273 41.584-8.122 60.426-16.243-14.292 20.791-32.161 39.308-52.628 54.253z"/></svg><span style="color:#3c8ff5">90K Followers</span><em style="background:#1da1f2;width:62px">Follow</em></div>
<div class="soc" style="top:2470px;background:#cce3ff"><b style="background:#1877f2"></b><svg style="left:16px;top:11px" width="18" height="27" viewBox="0 0 320 512"><path fill="#fff" d="M279.14 288l14.22-92.66h-88.91v-60.13c0-25.35 12.42-50.06 52.24-50.06h40.42V6.26S260.43 0 225.36 0c-73.22 0-121.08 44.38-121.08 124.72v70.62H22.89V288h81.39v224h100.17V288z"/></svg><span style="color:#3c8ff5">2M Like</span><em style="background:#1877f2;width:46px">Like</em></div>
<div class="soc" style="top:2530px;background:#fcc"><b style="background:#f00"></b><svg style="left:11px;top:14px" width="28" height="20" viewBox="0 0 28 20"><rect width="27" height="19" x=".5" y=".5" rx="4" fill="#fff"/><path d="M11 6l7 4-7 4z" fill="#f00"/></svg><span style="color:#f00">1M Subs</span><em style="background:#f00;width:84px">Subscribe</em></div>
<div class="soc" style="top:2590px;background:#cce3ff"><b style="background:#0077b5"></b><svg style="left:14px;top:13px" width="23" height="23" viewBox="0 0 23 23"><rect x=".5" y=".5" width="22" height="22" fill="#fff"/><path d="M4 9h3v10H4zM10 9h3v2c1-2 6-3 7 2v6h-3v-5c0-3-4-3-4 0v5h-3z" fill="#0077b5"/><circle cx="5.5" cy="5.5" r="1.8" fill="#0077b5"/></svg><span style="color:#3c8ff5">70K Followers</span><em style="background:#0077b5;width:62px">Follow</em></div>

<!-- projects -->
<div class="card" style="left:227px;top:2680px;width:1130px;height:561px"></div>
<div class="h2" style="left:247px;top:2703px">Projects</div>
<table>
<colgroup><col style="width:236px"><col style="width:173px"><col style="width:210px"><col style="width:107px"><col style="width:188px"><col style="width:176px"></colgroup>
<tr><th>Name</th><th>Finish Date</th><th>Client</th><th>Price</th><th>Team</th><th>Status</th></tr>
<tr><td>Ministry Wikipedia</td><td>10 May 2022</td><td>Ministry</td><td>$5300</td><td><div class="team"><svg style="left:3px;color:#3f7f9f"><use href="#tm"/></svg><svg style="left:22px;color:#7cb552"><use href="#tm"/></svg><svg style="left:42px;color:#7cb552"><use href="#tm"/></svg><svg style="left:61px;color:#d0453f"><use href="#tm"/></svg></div></td><td><span class="s" style="background:#f59e0b;width:63px">Pending</span></td></tr>
<tr><td>Elzero Shop</td><td>12 Oct 2021</td><td>Elzero Company</td><td>$1500</td><td><div class="team"><svg style="left:3px;color:#3f7f9f"><use href="#tm"/></svg><svg style="left:22px;color:#7cb552"><use href="#tm"/></svg><svg style="left:42px;color:#d0453f"><use href="#tm"/></svg></div></td><td><span class="s" style="background:#0075ff;width:85px">In Progress</span></td></tr>
<tr><td>Bouba App</td><td>05 Sep 2021</td><td>Bouba</td><td>$800</td><td><div class="team"><svg style="left:3px;color:#7cb552"><use href="#tm"/></svg><svg style="left:22px;color:#7cb552"><use href="#tm"/></svg></div></td><td><span class="s" style="background:#22c55e;width:83px">Completed</span></td></tr>
<tr><td>Mahmoud Website</td><td>22 May 2021</td><td>Mahmoud</td><td>$600</td><td><div class="team"><svg style="left:3px;color:#3f7f9f"><use href="#tm"/></svg><svg style="left:22px;color:#7cb552"><use href="#tm"/></svg></div></td><td><span class="s" style="background:#22c55e;width:83px">Completed</span></td></tr>
<tr><td>Sayed Website</td><td>24 May 2021</td><td>Sayed</td><td>$300</td><td><div class="team"><svg style="left:3px;color:#3f7f9f"><use href="#tm"/></svg><svg style="left:22px;color:#7cb552"><use href="#tm"/></svg></div></td><td><span class="s" style="background:#f44336;width:67px">Rejected</span></td></tr>
<tr><td>Arena Application</td><td>01 Mar 2021</td><td>Arena Company</td><td>$2600</td><td><div class="team"><svg style="left:3px;color:#3f7f9f"><use href="#tm"/></svg><svg style="left:22px;color:#7cb552"><use href="#tm"/></svg><svg style="left:42px;color:#7cb552"><use href="#tm"/></svg><svg style="left:61px;color:#d0792a"><use href="#tm"/></svg></div></td><td><span class="s" style="background:#22c55e;width:83px">Completed</span></td></tr>
</table>
<div class="a b" dir="rtl" style="left:590px;top:3098px;width:185px;text-align:center;font-family:'DejaVu Sans',sans-serif;font-size:48px;line-height:70px;color:rgba(110,110,110,.2)">مستقل</div>
<div class="a b" style="left:600px;top:3160px;width:165px;text-align:center;font-size:25px;line-height:28px;color:rgba(110,110,110,.2)">mostaql.com</div>
</body>
</html>
